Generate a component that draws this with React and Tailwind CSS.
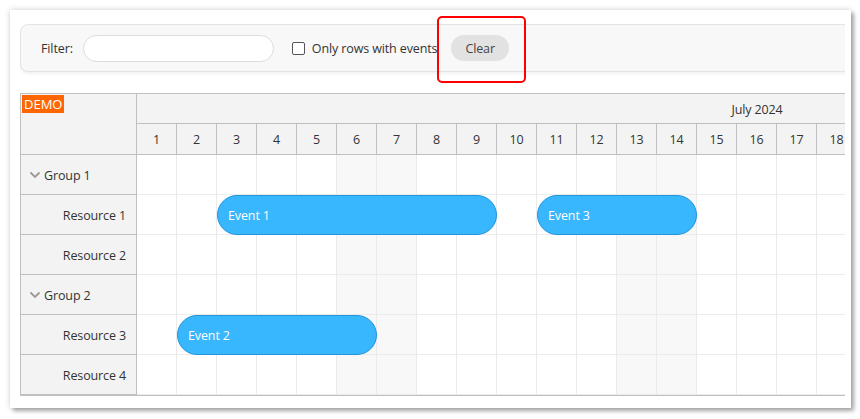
import React from 'react'

const DAYS = Array.from({ length: 31 }, (_, i) => i + 1)
const WEEKEND = [6, 7, 13, 14, 20, 21, 27, 28]

const ROWS = [
  { id: 'g1', name: 'Group 1', group: true },
  { id: 'r1', name: 'Resource 1' },
  { id: 'r2', name: 'Resource 2' },
  { id: 'g2', name: 'Group 2', group: true },
  { id: 'r3', name: 'Resource 3' },
  { id: 'r4', name: 'Resource 4' },
]

const EVENTS = [
  { id: 1, row: 'r1', text: 'Event 1', start: 3, end: 9 },
  { id: 3, row: 'r1', text: 'Event 3', start: 11, end: 14 },
  { id: 2, row: 'r3', text: 'Event 2', start: 2, end: 6 },
]

function Chevron() {
  return (
    <svg width="12" height="8" viewBox="0 0 12 8" className="shrink-0 -mt-[3px]">
      <polyline points="1.5,1.5 6,6 10.5,1.5" fill="none" stroke="#9a9a9a" strokeWidth="1.8" />
    </svg>
  )
}

function Toolbar() {
  return (
    <div className="relative w-[840px] h-12 bg-[#f8f8f8] border border-[#e3e3e3] rounded-l-lg shadow-[0_2px_3px_rgba(0,0,0,0.06)] flex items-center pl-5 text-[#333]">
      <span className="pt-[3px]">Filter:</span>
      <div className="ml-[10px] w-[191px] h-[27px] rounded-full bg-white border border-[#dcdcdc]" />
      <span className="ml-[18px] w-[13px] h-[13px] rounded-[2px] border border-[#555] bg-white" />
      <span className="ml-[7px] pt-[3px]">Only rows with events</span>
      <button className="ml-[14px] h-[26px] pt-[3px] px-[14px] rounded-full bg-[#e2e2e2] text-[#444]">Clear</button>
    </div>
  )
}

function RowHeaders() {
  return (
    <div className="w-[116px] shrink-0 bg-[#f3f3f3] border-r border-[#c0c0c0]">
      <div className="h-[61px] border-b border-[#c0c0c0] pt-px pl-px">
        <span className="inline-block bg-[#ff6600] text-white text-[13px] tracking-normal leading-[18px] px-[2px]">DEMO</span>
      </div>
      {ROWS.map((r) =>
        r.group ? (
          <div key={r.id} className="h-10 border-b border-[#c0c0c0] flex items-center gap-[3px] pl-[8px] pt-[4px]">
            <Chevron />
            <span>{r.name}</span>
          </div>
        ) : (
          <div key={r.id} className="h-10 border-b border-[#c0c0c0] flex items-center justify-end pr-[10px] pt-[4px]">
            {r.name}
          </div>
        )
      )}
    </div>
  )
}

function Grid() {
  return (
    <div className="flex flex-col shrink-0 w-[1240px]">
      <div className="h-[30px] border-b border-[#c0c0c0] bg-[#f3f3f3] flex items-center justify-center pt-[4px]">July 2024</div>
      <div className="h-[31px] border-b border-[#c0c0c0] bg-[#f3f3f3] flex">
        {DAYS.map((d) => (
          <div key={d} className="w-10 shrink-0 border-r border-[#c0c0c0] flex items-center justify-center pt-[3px]">
            {d}
          </div>
        ))}
      </div>
      {ROWS.map((r) => (
        <div key={r.id} className="relative h-10 flex">
          {DAYS.map((d) => (
            <div
              key={d}
              className={`w-10 shrink-0 border-r border-b border-[#ebebeb] ${WEEKEND.includes(d) ? 'bg-[#f8f8f8]' : 'bg-white'}`}
            />
          ))}
          {EVENTS.filter((e) => e.row === r.id).map((e) => (
            <div
              key={e.id}
              className="absolute top-0 h-10 rounded-full bg-[#38b6fe] border border-[#2196d9] text-white flex items-center pl-[10px] pt-[3px]"
              style={{ left: (e.start - 1) * 40, width: (e.end - e.start + 1) * 40 }}
            >
              {e.text}
            </div>
          ))}
        </div>
      ))}
    </div>
  )
}

export default function App() {
  return (
    <div className="w-[860px] h-[419px] bg-white pt-[10px] pl-[10px] font-['Open_Sans',sans-serif] text-[12.5px] tracking-[-0.12px] text-[#333]">
      <div className="relative w-[841px] h-[398px] bg-white shadow-[0_0_6px_rgba(0,0,0,0.18),3px_3px_4px_rgba(0,0,0,0.3)] pt-[14px] pl-[10px]">
        <div className="w-[825px] overflow-hidden">
          <Toolbar />
          <div className="mt-[21px] border-t border-l border-b border-[#c0c0c0] flex">
            <RowHeaders />
            <Grid />
          </div>
        </div>
        <div className="absolute left-[427px] top-[6px] w-[89px] h-[67px] border-2 border-[#ff0000] rounded-[5px]" />
      </div>
    </div>
  )
}
